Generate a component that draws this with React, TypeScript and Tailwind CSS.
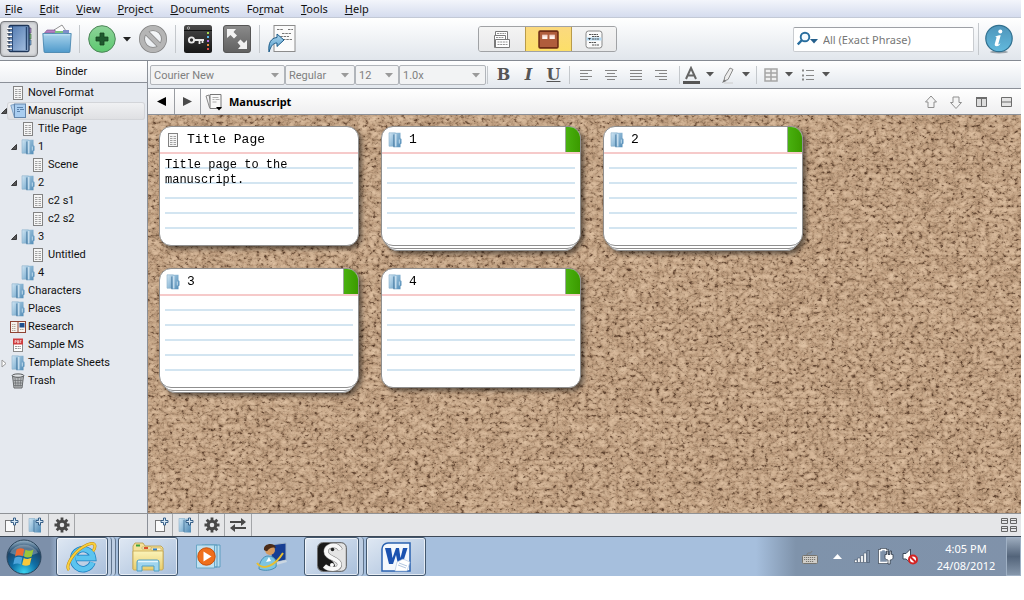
import type { ReactNode } from 'react';

type IconKind = 'page' | 'folder' | 'draft' | 'research' | 'pdf' | 'trash';

type BinderItem = {
  label: string;
  icon: IconKind;
  level: 0 | 1 | 2;
  arrow?: 'open' | 'closed';
  selected?: boolean;
};

const MENUS = [
  ['', 'F', 'ile'],
  ['', 'E', 'dit'],
  ['', 'V', 'iew'],
  ['', 'P', 'roject'],
  ['', 'D', 'ocuments'],
  ['Fo', 'r', 'mat'],
  ['', 'T', 'ools'],
  ['', 'H', 'elp'],
];

const BINDER: BinderItem[] = [
  { label: 'Novel Format', icon: 'page', level: 0 },
  { label: 'Manuscript', icon: 'draft', level: 0, arrow: 'open', selected: true },
  { label: 'Title Page', icon: 'page', level: 1 },
  { label: '1', icon: 'folder', level: 1, arrow: 'open' },
  { label: 'Scene', icon: 'page', level: 2 },
  { label: '2', icon: 'folder', level: 1, arrow: 'open' },
  { label: 'c2 s1', icon: 'page', level: 2 },
  { label: 'c2 s2', icon: 'page', level: 2 },
  { label: '3', icon: 'folder', level: 1, arrow: 'open' },
  { label: 'Untitled', icon: 'page', level: 2 },
  { label: '4', icon: 'folder', level: 1 },
  { label: 'Characters', icon: 'folder', level: 0 },
  { label: 'Places', icon: 'folder', level: 0 },
  { label: 'Research', icon: 'research', level: 0 },
  { label: 'Sample MS', icon: 'pdf', level: 0 },
  { label: 'Template Sheets', icon: 'folder', level: 0, arrow: 'closed' },
  { label: 'Trash', icon: 'trash', level: 0 },
];

const INDENT = { 0: 'pl-0', 1: 'pl-[10px]', 2: 'pl-[20px]' };

const CARDS = [
  { title: 'Title Page', text: 'Title page to the manuscript.', icon: 'page' as IconKind },
  { title: '1', icon: 'folder' as IconKind, label: true, stack: true },
  { title: '2', icon: 'folder' as IconKind, label: true, stack: true },
  { title: '3', icon: 'folder' as IconKind, label: true, stack: true },
  { title: '4', icon: 'folder' as IconKind, label: true },
];

function Defs() {
  return (
    <svg className="absolute h-0 w-0" aria-hidden="true">
      <defs>
        <linearGradient id="folder" x2="1" y2="1">
          <stop offset="0" stopColor="#d3e7f4" />
          <stop offset="1" stopColor="#6fa5ca" />
        </linearGradient>
        <linearGradient id="folderFront" x2="1" y2="1">
          <stop offset="0" stopColor="#a9cbe2" />
          <stop offset="1" stopColor="#4c88b4" />
        </linearGradient>
        <linearGradient id="blueV" x2="0" y2="1">
          <stop offset="0" stopColor="#a9d3ec" />
          <stop offset="1" stopColor="#4f9acb" />
        </linearGradient>
        <linearGradient id="notebook" x2="1" y2="1">
          <stop offset="0" stopColor="#4d76ad" />
          <stop offset="1" stopColor="#a9c3e3" />
        </linearGradient>
        <linearGradient id="green" x2="0" y2="1">
          <stop offset="0" stopColor="#8ed39a" />
          <stop offset="1" stopColor="#5cc96f" />
        </linearGradient>
        <linearGradient id="info" x2="0" y2="1">
          <stop offset="0" stopColor="#4e94b9" />
          <stop offset="1" stopColor="#62bade" />
        </linearGradient>
        <linearGradient id="dark" x2="0" y2="1">
          <stop offset="0" stopColor="#4a4a4a" />
          <stop offset="1" stopColor="#161616" />
        </linearGradient>
        <linearGradient id="gray" x2="0" y2="1">
          <stop offset="0" stopColor="#8b8b8b" />
          <stop offset="1" stopColor="#606060" />
        </linearGradient>
        <radialGradient id="orb" cx=".5" cy=".95" r=".95">
          <stop offset="0" stopColor="#39d3f0" />
          <stop offset=".4" stopColor="#0f6fa6" />
          <stop offset=".75" stopColor="#1c4468" />
          <stop offset="1" stopColor="#9fb9cc" />
        </radialGradient>
        <linearGradient id="manila" x2="0" y2="1">
          <stop offset="0" stopColor="#fbf3b9" />
          <stop offset="1" stopColor="#e9cd6c" />
        </linearGradient>
      </defs>
    </svg>
  );
}

function ItemIcon({ kind }: { kind: IconKind }) {
  return (
    <svg width="16" height="16" viewBox="0 0 16 16" className="shrink-0" aria-hidden="true">
      {kind === 'page' && (
        <>
          <rect x="3.5" y="1.5" width="9" height="13" fill="#f6f6f6" stroke="#828282" />
          <path d="M5 4.500h6M5 6.500h6M5 8.500h6M5 10.500h6M5 12.500h6" stroke="#a2a2a2" strokeDasharray="2 .5 1 .5" />
        </>
      )}
      {kind === 'folder' && (
        <>
          <path d="M2 .8h6.500v13.400H2z" fill="url(#folder)" stroke="#86aeca" strokeWidth=".6" />
          <path d="M6.800 2.500 9 .8h4.500v5.400l1 .8v4.500l-1 .7v3H6.800z" fill="url(#folderFront)" />
          <path d="M6.800 2.500v12.700" stroke="#3d7097" strokeWidth=".8" />
          <path d="M8.800 2v12.500" stroke="#d5e8f4" strokeWidth="1.200" />
          <path d="M12.300 7.500v4" stroke="#d5e8f4" strokeWidth=".8" />
        </>
      )}
      {kind === 'draft' && (
        <>
          <path d="m.8 2.300 3-.9 3 12-2.400.9z" fill="#b9d3ee" stroke="#6b93bd" strokeWidth=".8" />
          <rect x="4.500" y="1" width="11" height="13.500" fill="#a9cdf0" stroke="#6486ab" />
          <path d="M7 4.500h6M7 6.500h2M10 6.500h4M7 8.500h3" stroke="#49709d" strokeWidth=".8" />
        </>
      )}
      {kind === 'research' && (
        <>
          <rect x=".5" y="2.500" width="15" height="11" fill="#f6f3ee" stroke="#8d4233" />
          <path d="M8 2v12" stroke="#8d4233" />
          <path d="M2 5.500h4M2 7.500h4M2 9.500h4M2 11.500h4M10 10.500h4" stroke="#b7aca0" strokeDasharray="1.500 .5" />
          <rect x="9.500" y="4" width="5" height="4.500" fill="#1f4f8f" />
        </>
      )}
      {kind === 'pdf' && (
        <>
          <rect x="3.500" y="2.500" width="9" height="12" fill="#fff" stroke="#8a8a8a" />
          <path d="M3 1.500h10v6H3z" fill="#cf3a3c" />
          <path d="M5 6V3.500h1.200V5H5M7.500 3.500V6H8.500V3.500zM10 6V3.500h1.500M10 5h1.200" stroke="#fff" strokeWidth=".6" fill="none" />
          <path d="M5 9.500h6M5 11.500h6" stroke="#999" strokeDasharray="2 .6" />
        </>
      )}
      {kind === 'trash' && (
        <>
          <path d="m2.500 3 1.500 12h8l1.500-12z" fill="#b9bcbe" stroke="#66696b" />
          <ellipse cx="8" cy="2.600" rx="5.800" ry="1.700" fill="#dfe2e4" stroke="#55585a" />
          <path d="m5 5 1 9M8 5v9M11 5l-1 9M3.500 7.500h9M4 10h8M4 12.500h8" stroke="#696c6e" strokeWidth=".7" />
        </>
      )}
    </svg>
  );
}

function Caret({ className = '' }: { className?: string }) {
  return (
    <svg width="8" height="5" viewBox="0 0 8 5" className={className} aria-hidden="true">
      <path d="M0 0h8L4 4.500z" fill="currentColor" />
    </svg>
  );
}

function Sep({ className = '' }: { className?: string }) {
  return <span className={`w-px shrink-0 bg-[#c4c8cc] ${className}`} />;
}

function IconButton({ label, className = '', children }: { label: string; className?: string; children: ReactNode }) {
  return (
    <button type="button" aria-label={label} className={`flex shrink-0 items-center justify-center ${className}`}>
      {children}
    </button>
  );
}

function MenuBar() {
  return (
    <nav className="flex h-[18px] shrink-0 items-center gap-[17px] border-b border-[#c3c9d6] bg-linear-to-b from-[#f3f5fb] to-[#d5dcee] pl-[5px] text-[11px] leading-4 text-[#111]">
      {MENUS.map(([before, key, after]) => (
        <button key={before + key + after} type="button">
          {before}
          <span className="underline">{key}</span>
          {after}
        </button>
      ))}
    </nav>
  );
}

function Toolbar() {
  return (
    <header className="flex h-[43px] shrink-0 items-center justify-between border-b border-[#858a93] bg-linear-to-b from-white to-[#e1e6ec]">
      <div className="flex items-center pr-1.5">
        <IconButton label="Binder" className="h-9 w-[38px] rounded border border-[#77797d] bg-[#d8dadd] shadow-[inset_0_0_3px_#9a9ca0]">
          <svg width="28" height="30" viewBox="0 0 28 30">
            <path d="M22 4h4v5h-4z" fill="#a682c9" stroke="#48405c" strokeWidth=".6" />
            <path d="M22 10h4v5h-4z" fill="#76b877" stroke="#3a5a3c" strokeWidth=".6" />
            <path d="M22 16h4v5h-4z" fill="#7aa6d2" stroke="#33506e" strokeWidth=".6" />
            <rect x="4" y="1.500" width="20" height="26" rx="1.500" fill="url(#notebook)" stroke="#1d3558" strokeWidth="1.300" />
            <path d="M7.500 2v25" stroke="#2c4d7c" />
            <path d="M21.500 3v23" stroke="#27456f" strokeWidth="1.500" />
            <path d="M2 4.500h5M2 8.500h5M2 12.500h5M2 16.500h5M2 20.500h5M2 24.500h5" stroke="#fff" strokeWidth="1.600" />
            <path d="M2 5.600h5M2 9.600h5M2 13.600h5M2 17.600h5M2 21.600h5M2 25.600h5" stroke="#3b434f" strokeWidth=".7" />
          </svg>
        </IconButton>
        <IconButton label="Collections" className="ml-1 h-9 w-[30px]">
          <svg width="30" height="30" viewBox="0 0 30 30">
            <path d="m12 6 8-5 6 9-16 2z" fill="#fdfdfd" stroke="#777" strokeWidth=".8" />
            <path d="M2.500 9 5 6h8l1 3z" fill="#b57fc4" stroke="#735180" strokeWidth=".6" />
            <path d="M13 9V7h8v2z" fill="#7bc47f" />
            <path d="M21 9V6h6v3z" fill="#7f8ec9" />
            <path d="M.8 9.500h28.400l-1.200 18a1 1 0 0 1-1 1H3a1 1 0 0 1-1-1z" fill="url(#blueV)" stroke="#3f7fa9" strokeWidth=".8" />
            <path d="M2 10.800h26" stroke="#c6e4f4" />
          </svg>
        </IconButton>
        <Sep className="ml-[7px] h-7" />
        <IconButton label="Add" className="ml-2 h-9 w-7">
          <svg width="28" height="28" viewBox="0 0 28 28">
            <circle cx="14" cy="14" r="13.300" fill="url(#green)" stroke="#4d8558" />
            <path d="M12 8h4v4h4v4h-4v4h-4v-4H8v-4h4z" fill="#1f5a2f" stroke="#17421f" strokeWidth=".8" />
          </svg>
        </IconButton>
        <IconButton label="Add options" className="ml-[7px] h-9 w-2 text-[#222]">
          <Caret />
        </IconButton>
        <IconButton label="Trash" className="ml-2 h-9 w-7">
          <svg width="28" height="28" viewBox="0 0 28 28" fill="none">
            <circle cx="14" cy="14" r="11" stroke="#858585" strokeWidth="6" />
            <path d="m6.500 6.500 15 15" stroke="#858585" strokeWidth="5.500" />
            <circle cx="14" cy="14" r="11" stroke="#b5b5b5" strokeWidth="4.400" />
            <path d="m6.500 6.500 15 15" stroke="#b5b5b5" strokeWidth="4" />
          </svg>
        </IconButton>
        <Sep className="ml-2 h-7" />
        <IconButton label="Keywords" className="ml-2 h-9 w-7">
          <svg width="28" height="28" viewBox="0 0 28 28">
            <rect width="28" height="28" rx="2.500" fill="url(#dark)" />
            <path d="M0 5.500h28" stroke="#111" />
            <circle cx="4.500" cy="3" r="1.200" fill="none" stroke="#ccc" strokeWidth=".7" />
            <circle cx="7.500" cy="15" r="2.600" fill="none" stroke="#e9e9e9" strokeWidth="1.900" />
            <path d="M10 15h10M15.500 15v4M18.500 15v3" stroke="#e9e9e9" strokeWidth="1.800" />
            <path d="M23 7h2v2h-2z" fill="#a5d84f" />
            <path d="M23 11h2v2h-2z" fill="#58b8e8" />
            <path d="M23 15h2v2h-2z" fill="#b36be0" />
            <path d="M23 19h2v2h-2z" fill="#ee8b3c" />
            <path d="M23 23h2v2h-2z" fill="#df4a4a" />
          </svg>
        </IconButton>
        <IconButton label="Full screen" className="ml-[11px] h-9 w-7">
          <svg width="28" height="28" viewBox="0 0 28 28">
            <rect x=".5" y=".5" width="27" height="27" rx="2.500" fill="url(#gray)" stroke="#555" />
            <path d="M4 4h9l-2.500 3 3.500 3.500-3 3L7.500 10 4 13zM24 24h-9l2.500-3-3-3.500 3-3L21 18l3-3z" fill="#f3f3f3" />
          </svg>
        </IconButton>
        <Sep className="ml-2 h-7" />
        <IconButton label="Compile" className="ml-2 h-9 w-7">
          <svg width="28" height="30" viewBox="0 0 28 30">
            <rect x="6" y="1.500" width="21" height="26" fill="#fbfbfb" stroke="#8c8c8c" />
            <path d="M9 5.500h6M20 5.500h5M14 9.500h9M9 12.500h12M15 15.500h9" stroke="#777" strokeDasharray="2.500 .8" />
            <path d="M1 28c-1-9 2-14 8-14.500V10l7 6-7 6.500V19c-4 0-6 3-8 9z" fill="url(#blueV)" stroke="#1d5b88" />
          </svg>
        </IconButton>
      </div>

      <div className="flex h-[26px] overflow-hidden rounded-[3px] border border-[#a0a2a5] bg-[#eceded]">
        <IconButton label="Document view" className="w-[46px] bg-linear-to-b from-[#f4f4f4] to-[#e8e9ea]">
          <svg width="18" height="19" viewBox="0 0 18 19" stroke="#7a7a7a">
            <path d="M2.500 1.500h12v8h-12z" fill="#fff" />
            <path d="M4 3.500h9" strokeDasharray="2 .7" strokeWidth=".8" />
            <path d="M1.500 5.500h11v12h-11z" fill="#fff" />
            <path d="M3 7.500h8" strokeDasharray="2 .7" strokeWidth=".8" />
            <path d="M2.500 9.500h14v8h-14z" fill="#fff" />
            <path d="M4.500 12h10M4.500 14.500h10" strokeDasharray="2 .7" strokeWidth=".8" />
          </svg>
        </IconButton>
        <IconButton label="Corkboard" className="w-[47px] border-x border-[#b99b4a] bg-linear-to-b from-[#fbd97f] to-[#fcdf68]">
          <svg width="21" height="19" viewBox="0 0 20 18">
            <rect x="1" y="1" width="18" height="16" rx="1" fill="#b05d3c" stroke="#6c2b16" strokeWidth="1.500" />
            <path d="M4 4.500h5v4H4zM11 4.500h5v4h-5z" fill="#fff3ee" />
            <path d="M4 5.500h5M11 5.500h5" stroke="#e4a293" strokeWidth=".6" />
          </svg>
        </IconButton>
        <IconButton label="Outline" className="w-11 bg-linear-to-b from-[#f4f4f4] to-[#e8e9ea]">
          <svg width="18" height="19" viewBox="0 0 18 19">
            <rect x="1" y="1" width="16" height="17" rx="2.500" fill="#fafafa" stroke="#888" />
            <path d="M1.500 7.500h15v3h-15z" fill="#b5d9f1" />
            <path d="M4 4.500h9M7 6.500h7M7 9h7M4 12.500h7M7 15h7" stroke="#555" strokeDasharray="2 .5" />
            <path d="m3 8 3 0L4.500 10z" fill="#333" />
          </svg>
        </IconButton>
      </div>

      <div className="flex items-center">
        <label className="flex h-[25px] w-[181px] items-center rounded-[2px] border border-[#c9ccd0] border-t-[#9da0a5] bg-white pl-[3px]">
          <svg width="22" height="16" viewBox="0 0 22 16" className="shrink-0">
            <circle cx="8" cy="6" r="4.300" fill="#f5fbff" stroke="#276d9e" strokeWidth="1.900" />
            <path d="m5 9-4.200 4.500" stroke="#276d9e" strokeWidth="2.400" />
            <path d="M13 8h8l-4 4.500z" fill="#245f8c" />
          </svg>
          <input
            aria-label="Search project"
            placeholder="All (Exact Phrase)"
            className="ml-1 w-full min-w-0 bg-transparent pt-0.5 text-[11px] placeholder:text-[#777] focus:outline-none"
          />
        </label>
        <Sep className="ml-1 h-8" />
        <IconButton label="Inspector" className="mr-2 ml-[6px] h-9 w-7">
          <svg width="28" height="30" viewBox="0 0 28 30">
            <ellipse cx="14" cy="28" rx="9" ry="1.500" fill="#9aa3aa" />
            <circle cx="14" cy="14.500" r="13.200" fill="url(#info)" stroke="#31708f" strokeWidth="1.200" />
            <circle cx="15.300" cy="7.600" r="2" fill="#fff" />
            <path d="M10.500 12.500c2-.9 3.500-1.200 5.200-1.200l-2.400 8.600c-.2.800.5.800 2.100-.6-.6 1.800-1.900 2.900-3.700 2.900-1.700 0-2.300-1-1.900-2.500l1.700-6c.1-.6-.3-.7-1-.6z" fill="#fff" />
          </svg>
        </IconButton>
      </div>
    </header>
  );
}

function Binder() {
  return (
    <aside className="flex w-[148px] shrink-0 flex-col border-r border-[#8b9098] bg-[#e5e9ef]">
      <h2 className="flex h-[22px] items-center justify-center border-b border-[#8b9098] bg-linear-to-b from-white to-[#eef0f4] pt-0.5 pr-1 font-[Roboto,sans-serif] text-[11px]">
        Binder
      </h2>
      <ul className="flex-1 pt-px font-[Roboto,sans-serif]">
        {BINDER.map((item, i) => (
          <li key={i} className={INDENT[item.level]}>
            <button type="button" className="flex h-[18px] w-full items-center text-left">
              <span className="flex w-[7px] shrink-0 justify-end">
                {item.arrow === 'open' && (
                  <svg width="6" height="6" viewBox="0 0 6 6">
                    <path d="M5.500.500v5h-5z" fill="#555" stroke="#222" strokeWidth=".8" />
                  </svg>
                )}
                {item.arrow === 'closed' && (
                  <svg width="6" height="9" viewBox="0 0 6 9">
                    <path d="M1 1v7l4-3.500z" fill="#fff" stroke="#999" />
                  </svg>
                )}
              </span>
              <span
                className={`mr-[2px] flex h-[18px] flex-1 items-center gap-[2px] pl-[3px] ${
                  item.selected ? 'rounded-[3px] bg-linear-to-b from-[#f1f2f4] to-[#dedfe2] ring-1 ring-[#d3d5d9] ring-inset' : ''
                }`}
              >
                <ItemIcon kind={item.icon} />
                {item.label}
              </span>
            </button>
          </li>
        ))}
      </ul>
      <footer className="flex h-[23px] border-t border-[#8f9296] bg-[#e5e6e8]">
        <FooterTools />
      </footer>
    </aside>
  );
}

function FooterTools() {
  return (
    <>
      <IconButton label="Add document" className="w-[23px] border-r border-[#a3a5a8]">
        <NewItemIcon />
      </IconButton>
      <IconButton label="Add folder" className="w-[26px] border-r border-[#a3a5a8]">
        <NewItemIcon folder />
      </IconButton>
      <IconButton label="Actions" className="w-[26px] border-r border-[#a3a5a8]">
        <svg width="16" height="16" viewBox="0 0 16 16" fill="none" stroke="#484848">
          <circle cx="8" cy="8" r="3.800" strokeWidth="3" />
          <path d="M8 .5v3M8 12.500v3M.5 8h3M12.500 8h3M2.700 2.700l2 2M11.300 11.300l2 2M13.300 2.700l-2 2M4.700 11.300l-2 2" strokeWidth="2.800" />
        </svg>
      </IconButton>
    </>
  );
}

function NewItemIcon({ folder = false }: { folder?: boolean }) {
  return (
    <svg width="16" height="16" viewBox="0 0 16 16">
      {folder ? (
        <>
          <path d="M1 1.500h6v13H1z" fill="url(#folder)" stroke="#86aeca" strokeWidth=".6" />
          <path d="M6 3 8.500 1.500h4.500V15.500H6z" fill="url(#folderFront)" />
          <path d="M6 3v12" stroke="#3d7097" strokeWidth=".8" />
        </>
      ) : (
        <rect x="2.500" y="3.500" width="9" height="11" fill="#fafafa" stroke="#777" />
      )}
      <path d="M10.500 1h2v2.500H15v2h-2.500V8h-2V5.500H8v-2h2.500z" fill="#d5e7f5" stroke="#28527d" strokeWidth=".9" />
    </svg>
  );
}

function FormatSelect({ label, value, className }: { label: string; value: string; className: string }) {
  return (
    <div className={`relative ${className}`}>
      <select
        aria-label={label}
        className="h-5 w-full appearance-none rounded-[2px] border border-[#b1b5ba] bg-[#f2f3f4] pt-0.5 pl-[3px] font-[Roboto,sans-serif] text-[11px] text-[#808080]"
      >
        <option>{value}</option>
      </select>
      <Caret className="pointer-events-none absolute top-2 right-1.5 text-[#9a9a9a]" />
    </div>
  );
}

const ALIGN = {
  left: 'M0 .5h12M0 3.500h8M0 6.500h12M0 9.500h8',
  center: 'M0 .5h12M2 3.500h8M0 6.500h12M2 9.500h8',
  justify: 'M0 .5h12M0 3.500h12M0 6.500h12M0 9.500h12',
  right: 'M0 .5h12M4 3.500h8M0 6.500h12M4 9.500h8',
};

function FormatBar() {
  return (
    <div className="flex h-7 shrink-0 items-center border-b border-[#8b9098] bg-linear-to-b from-white to-[#e3e8ee] pl-[2px] text-[#555]">
      <FormatSelect label="Font" value="Courier New" className="w-[135px]" />
      <FormatSelect label="Style" value="Regular" className="w-[70px]" />
      <FormatSelect label="Size" value="12" className="w-11" />
      <FormatSelect label="Line spacing" value="1.0x" className="w-[87px]" />
      <Sep className="mr-[3px] ml-px h-[18px]" />
      <button type="button" className="w-[25px] font-[DejaVu_Serif,serif] text-[16px] leading-5 font-bold">
        B
      </button>
      <button type="button" className="w-[25px] font-[DejaVu_Serif,serif] text-[16px] leading-5 font-bold italic">
        I
      </button>
      <button type="button" className="w-[25px] font-[DejaVu_Serif,serif] text-[16px] leading-5 font-bold underline">
        U
      </button>
      <Sep className="mx-[3px] h-[18px]" />
      {Object.entries(ALIGN).map(([name, d]) => (
        <IconButton key={name} label={`Align ${name}`} className="h-5 w-[25px]">
          <svg width="12" height="10" viewBox="0 0 12 10">
            <path d={d} stroke="#858585" />
          </svg>
        </IconButton>
      ))}
      <Sep className="ml-[6px] h-[18px]" />
      <IconButton label="Text color" className="ml-0.5 h-5 w-[18px]">
        <svg width="18" height="18" viewBox="0 0 18 18">
          <path d="m4 13 5-11 5 11M6 9.500h6" fill="none" stroke="#666" strokeWidth="2" />
          <path d="M1 15h17v3H1z" fill="#555" />
        </svg>
      </IconButton>
      <Caret className="mx-[6px]" />
      <IconButton label="Highlight" className="h-5 w-4">
        <svg width="16" height="18" viewBox="0 0 16 18">
          <path d="M10 2 13 3.500 8 13.500 4 15l.8-4.500z" fill="#ececec" stroke="#8a8a8a" />
          <path d="m2 17 2-3.500 2.500 1.500z" fill="#777" />
          <path d="M4 17h9" stroke="#ccc" />
        </svg>
      </IconButton>
      <Caret className="mx-[6px]" />
      <Sep className="h-[18px]" />
      <IconButton label="Table" className="ml-[7px] h-5 w-[14px]">
        <svg width="14" height="14" viewBox="0 0 14 14">
          <path d="M1 1h12v12H1zM1 5h12M1 9h12M7 1v12" fill="#f0f0f0" stroke="#a5a5a5" strokeWidth="1.500" />
        </svg>
      </IconButton>
      <Caret className="mx-[7px]" />
      <IconButton label="List" className="ml-0.5 h-5 w-3">
        <svg width="12" height="12" viewBox="0 0 12 12" stroke="#888">
          <path d="M4 1.500h8M4 6.500h8M4 10.500h8" />
          <path d="M0 1.500h2M0 6.500h2M0 10.500h2" strokeWidth="2" />
        </svg>
      </IconButton>
      <Caret className="mx-2" />
    </div>
  );
}

function EditorHeader() {
  return (
    <div className="flex h-[26px] shrink-0 items-center border-b border-[#8b9098] bg-linear-to-b from-white to-[#efeff0]">
      <IconButton label="Back" className="h-full w-[27px] border-r border-[#9a9da2]">
        <svg width="9" height="9" viewBox="0 0 9 9">
          <path d="M9 0v9L0 4.500z" fill="#000" />
        </svg>
      </IconButton>
      <IconButton label="Forward" className="h-full w-[26px] border-r border-[#9a9da2]">
        <svg width="9" height="9" viewBox="0 0 9 9">
          <path d="M0 0v9l9-4.500z" fill="#4a4a4a" />
        </svg>
      </IconButton>
      <IconButton label="Item menu" className="ml-1 h-5 w-[18px]">
        <svg width="18" height="18" viewBox="0 0 18 18">
          <path d="m1 3 3-1 2.500 12-2 .6z" fill="#f3f3f3" stroke="#888" />
          <path d="M5 1.500h11v14H5z" fill="#f9f9f9" stroke="#777" />
          <path d="M7.500 4.500h6M7.500 6.500h2M10.500 6.500h4M7.500 9h4" stroke="#999" strokeWidth=".8" />
          <path d="M11 14h6l-3 3.500z" fill="#000" />
        </svg>
      </IconButton>
      <h1 className="ml-1.5 flex-1 pt-0.5 text-[11px] font-bold text-black">Manuscript</h1>
      <div className="flex items-center gap-[11px] pr-2">
        <IconButton label="Previous" className="w-[14px]">
          <svg width="14" height="14" viewBox="0 0 14 14">
            <path d="m7 1 5.500 6H10v5.500H4V7H1.500z" fill="#f4f4f4" stroke="#8f8f8f" />
          </svg>
        </IconButton>
        <IconButton label="Next" className="w-[14px]">
          <svg width="14" height="14" viewBox="0 0 14 14">
            <path d="m7 13.500 5.500-6H10V2H4v5.500H1.500z" fill="#f4f4f4" stroke="#8f8f8f" />
          </svg>
        </IconButton>
        <IconButton label="Split vertically" className="w-[14px]">
          <svg width="11" height="10" viewBox="0 0 11 10">
            <path d="M.5.500h10v9H.5zM5.500 1v8" fill="#dcdcdc" stroke="#6d6d6d" />
            <path d="M0 1h11" stroke="#6d6d6d" strokeWidth="2" />
          </svg>
        </IconButton>
        <IconButton label="Split horizontally" className="w-[14px]">
          <svg width="11" height="10" viewBox="0 0 11 10">
            <path d="M.5.500h10v9H.5zM0 5h11" fill="#e4e4e4" stroke="#6d6d6d" />
          </svg>
        </IconButton>
      </div>
    </div>
  );
}

function CorkTexture() {
  return (
    <svg className="absolute inset-0 h-full w-full" aria-hidden="true">
      <filter id="cork" x="0" y="0" width="100%" height="100%" colorInterpolationFilters="sRGB">
        {/* cracks between the cork flakes */}
        <feTurbulence type="turbulence" baseFrequency="0.1 0.12" numOctaves="3" seed="11" />
        <feColorMatrix values="1 0 0 0 0  1 0 0 0 0  1 0 0 0 0  0 0 0 0 1" />
        <feComponentTransfer result="cracks">
          <feFuncR type="table" tableValues=".62 .76 .8 .83 .86 .87 .87" />
          <feFuncG type="table" tableValues=".51 .63 .68 .71 .74 .76 .76" />
          <feFuncB type="table" tableValues=".4 .51 .56 .59 .62 .64 .64" />
        </feComponentTransfer>
        {/* fine grain */}
        <feTurbulence type="fractalNoise" baseFrequency="0.24 0.3" numOctaves="3" seed="4" />
        <feColorMatrix values="0 1 0 0 0  0 1 0 0 0  0 1 0 0 0  0 0 0 0 1" />
        <feComponentTransfer result="grain">
          <feFuncR type="table" tableValues=".45 .45 .55 .82 .94 .98 1.04 1.08 1.1 1.1" />
          <feFuncG type="table" tableValues=".37 .37 .48 .79 .93 .98 1.04 1.08 1.1 1.1" />
          <feFuncB type="table" tableValues=".32 .32 .43 .76 .92 .98 1.04 1.08 1.1 1.1" />
        </feComponentTransfer>
        <feComposite in="cracks" in2="grain" operator="arithmetic" k1="1" />
      </filter>
      <rect width="100%" height="100%" fill="#c3a080" filter="url(#cork)" />
    </svg>
  );
}

function IndexCard({ card }: { card: (typeof CARDS)[number] }) {
  return (
    <li className="relative h-[120px] w-[200px] drop-shadow-[3px_3px_2px_rgba(0,0,0,0.5)]">
      {card.stack && (
        <>
          <div className="absolute inset-x-1 top-3 -bottom-[5px] rounded-xl border border-[#8f8f8f] bg-white" />
          <div className="absolute inset-x-0.5 top-3 -bottom-[3px] rounded-xl border border-[#8f8f8f] bg-white" />
        </>
      )}
      <article className="relative h-full overflow-hidden rounded-xl border border-[#8f8f8f] bg-white font-[Liberation_Mono,monospace] text-black">
        <header className="flex h-[27px] items-center border-b-2 border-[#f6caca] pl-[5px]">
          <ItemIcon kind={card.icon} />
          <h3 className="ml-1.5 flex-1 pt-px text-[13px]">{card.title}</h3>
          {card.label && <span className="h-full w-[15px] border-l border-[#9aa99a] bg-linear-to-r from-[#49b10f] to-[#3b9a00]" />}
        </header>
        <p className="mx-[5px] h-[75px] bg-[repeating-linear-gradient(to_bottom,transparent_0px,transparent_13px,#d3e5f1_13px,#d3e5f1_15px)] pt-1 text-[12px] leading-[15px]">
          {card.text}
        </p>
      </article>
    </li>
  );
}

function Corkboard() {
  return (
    <section className="relative flex-1 overflow-hidden bg-[#c3a080]">
      <CorkTexture />
      <ul className="relative flex flex-wrap gap-[22px] pt-[11px] pl-[11px]">
        {CARDS.map((card) => (
          <IndexCard key={card.title} card={card} />
        ))}
      </ul>
    </section>
  );
}

function EditorFooter() {
  return (
    <footer className="flex h-[23px] shrink-0 border-t border-[#8f9296] bg-[#e5e6e8] pl-[2px]">
      <FooterTools />
      <IconButton label="Swap" className="w-[27px] border-r border-[#a3a5a8]">
        <svg width="18" height="14" viewBox="0 0 18 14" fill="#484848">
          <path d="M1 3h11V0l5 4-5 4V5H1zM17 9H6V6L1 10l5 4v-3h11z" />
        </svg>
      </IconButton>
      <IconButton label="Card options" className="mr-1 ml-auto w-4">
        <svg width="16" height="14" viewBox="0 0 16 14" fill="none" stroke="#666">
          <path d="M.5.500h6v5h-6zM9.500.500h6v5h-6zM.5 8.500h6v5h-6zM9.500 8.500h6v5h-6zM1 2.500h5M10 2.500h5M1 10.500h5M10 10.500h5" />
        </svg>
      </IconButton>
    </footer>
  );
}

const FRAME =
  'border border-[#43586f] bg-linear-to-br from-[#dfe8f3] to-[#a9bfdb] shadow-[inset_0_0_0_1px_rgba(255,255,255,0.65)] rounded-[3px]';

function Taskbar() {
  return (
    <div className="flex h-10 shrink-0 items-center border-t border-[#3d4856] bg-[linear-gradient(to_right,#7d90aa_0px,#7d90aa_50px,#a6bfdd_62px,#a6bfdd_calc(100%-265px),#7f93ab_calc(100%-225px),#8092aa_100%)]">
      <IconButton label="Start" className="ml-1.5 h-full w-9">
        <svg width="36" height="36" viewBox="0 0 36 36">
          <circle cx="18" cy="18" r="17" fill="url(#orb)" stroke="#29435a" />
          <path d="M4 14a15 13 0 0 1 28 0c-9 4-19 4-28 0z" fill="#fff" opacity=".28" />
          <path d="M10.500 10.500c3-1.700 5.400-1.700 7.700-.3l-1.500 7c-2.400-1.400-5-1.300-7.700.2z" fill="#ee6a33" />
          <path d="M19.500 10.800c2.800 1.300 5.500 1.200 8-.4l-1.800 7c-2.600 1.500-5.200 1.500-7.700.2z" fill="#9bc63b" />
          <path d="M8.700 18.800c2.700-1.500 5.200-1.500 7.700-.2l-1.600 6.800c-2.400-1.300-5-1.200-7.600.2z" fill="#4da5dc" />
          <path d="M17.700 19c2.600 1.300 5.200 1.300 7.800-.2l-1.700 7c-2.600 1.400-5.200 1.400-7.700 0z" fill="#f8c83a" />
        </svg>
      </IconButton>
      <div className="ml-[14px] flex h-full">
        <IconButton label="Internet Explorer" className={`h-full w-[52px] ${FRAME}`}>
          <svg width="32" height="32" viewBox="0 0 32 32" fill="none">
            <path d="M26.500 21.500A10 10 0 1 1 27 17H10" stroke="#1d7fc0" strokeWidth="6.500" />
            <path d="M26.500 21.500A10 10 0 1 1 27 17H10" stroke="#5cc4ef" strokeWidth="5" />
            <path d="M3 29C-1 25 7 12 17 6c6-4 12-5 12-1 0 2-1 4-2 5" stroke="#c48a10" strokeWidth="3" />
            <path d="M3 29C-1 25 7 12 17 6c6-4 12-5 12-1 0 2-1 4-2 5" stroke="#f7cf3d" strokeWidth="2" />
          </svg>
        </IconButton>
        <span className="h-full w-1 rounded-r border-r border-[#61758d] bg-[#bccde2]" />
        <span className="h-full w-1 rounded-r border-r border-[#61758d] bg-[#bccde2]" />
      </div>
      <IconButton label="Windows Explorer" className={`ml-[2px] h-full w-[60px] ${FRAME}`}>
        <svg width="34" height="30" viewBox="0 0 34 30">
          <path d="M2 4 4 1h8l2 3h16l2 2v21H2z" fill="#f4e19a" stroke="#b79a44" strokeWidth=".8" />
          <path d="M5 2.500h4v2H5z" fill="#3aa23e" />
          <path d="M11 7V5h9l1 2z" fill="#fff8d8" stroke="#c0a24e" strokeWidth=".6" />
          <path d="M13 5h4v2h-4z" fill="#d9502b" />
          <path d="M20 8V6h10v3z" fill="#fff8d8" stroke="#c0a24e" strokeWidth=".6" />
          <path d="M22 6.500h4v2h-4z" fill="#2b7fcc" />
          <path d="M2 9h30v18a1 1 0 0 1-1 1H3a1 1 0 0 1-1-1z" fill="url(#manila)" stroke="#c7a64b" strokeWidth=".8" />
          <path d="M6 29V20q0-2 2-2h18q2 0 2 2v9h-5v-5H11v5z" fill="#9fd5ee" stroke="#4e9fc4" />
          <path d="M7 19.500h20" stroke="#e5f6fd" strokeWidth="1.500" />
        </svg>
      </IconButton>
      <IconButton label="Media Player" className="h-full w-[62px]">
        <svg width="30" height="28" viewBox="0 0 30 28">
          <path d="M11 2h15v22H11zM8 2h15v22H8z" fill="#b7def0" stroke="#5d9dc0" />
          <path d="M2.500 2h18v23h-18z" fill="#bfe1f1" stroke="#6ba7c5" />
          <circle cx="12.500" cy="13.500" r="8.700" fill="#ef6f1b" stroke="#c8500b" />
          <path d="m9.500 8.500 8 5-8 5z" fill="#fff" />
        </svg>
      </IconButton>
      <IconButton label="Live Messenger" className="h-full w-[64px]">
        <svg width="32" height="30" viewBox="0 0 32 30">
          <path d="m14 3 16-2v17l-14 3z" fill="#173e93" stroke="#9db2c8" />
          <path d="m16 21 14-3 1 2-14 4z" fill="#ccd7e2" />
          <circle cx="14" cy="8" r="5" fill="#d59a60" />
          <path d="M8 8c-1-7 11-8 12-2-4-1-6 0-8 2-1 2-2 1-4 0z" fill="#4b2c19" />
          <path d="M3 27c0-7 4-13 9-13 7 0 9 5 8 11-5 4-12 4-17 2z" fill="#7dc5e3" stroke="#4b8fb4" />
          <path d="M1 21c6 8 18 3 26-10" fill="none" stroke="#e8bf32" strokeWidth="2" />
          <path d="m13 15 2 4-5 1z" fill="#fff" />
        </svg>
      </IconButton>
      <div className="flex h-full">
        <IconButton label="Scrivener" className={`h-full w-[55px] ${FRAME}`}>
          <svg width="30" height="30" viewBox="0 0 30 30">
            <rect x=".7" y=".7" width="28.600" height="28.600" rx="5" fill="#e4e4e4" stroke="#555" />
            <path d="M15 1H6a5 5 0 0 0-5 5v18a5 5 0 0 0 5 5h9c5-3 3-8-1-11-4-2-6-4-6-9 0-4 3-7 7-8z" fill="#191919" />
            <path d="M23.500 8C22 5 19.500 3.500 16.500 3.500 12.500 3.500 9 5.500 9 9.500c0 7 13.500 7 13.500 13 0 3-3 4.500-6.500 4.500-4 0-6.500-1-8.500-3" fill="none" stroke="#777" strokeWidth="5" />
            <path d="M23.500 8C22 5 19.500 3.500 16.500 3.500 12.500 3.500 9 5.500 9 9.500c0 7 13.500 7 13.500 13 0 3-3 4.500-6.500 4.500-4 0-6.500-1-8.500-3" fill="none" stroke="#f8f8f8" strokeWidth="4" />
            <circle cx="15.500" cy="7.500" r="1.800" fill="#222" />
            <circle cx="15" cy="23" r="2" fill="#fff" />
          </svg>
        </IconButton>
        <span className="h-full w-[5px] rounded-r border-r border-[#61758d] bg-[#bccde2]" />
      </div>
      <IconButton label="Word" className={`ml-[2px] h-full w-[60px] ${FRAME}`}>
        <svg width="30" height="30" viewBox="0 0 30 30">
          <path d="M7 1h22v28H1V7a6 6 0 0 1 6-6z" fill="#f4f8fd" stroke="#2a62b0" strokeWidth="1.500" />
          <path d="M4 6h6l1.500 10L15 6h3l1.500 10L22 6h4.500l-5 16H17l-2-9-3 9H8z" fill="#1b52b0" />
          <path d="m16 20 6-3 7 3-3 9H14z" fill="#fff" stroke="#a9bfdd" strokeWidth=".6" />
          <path d="m18 21 8 3M17 23l8 3" stroke="#9db6d8" strokeWidth=".8" />
        </svg>
      </IconButton>

      <div className="ml-auto flex h-full items-center text-white">
        <IconButton label="Keyboard" className="w-4">
          <svg width="16" height="14" viewBox="0 0 16 14">
            <path d="M5 5c0-4 4 0 5-4" fill="none" stroke="#7b7b78" />
            <rect x=".5" y="5.500" width="15" height="8" rx="1" fill="#d0cec9" stroke="#77756f" />
            <path d="M2 7.500h12M2 9.500h12M4 11.500h8" stroke="#77756f" strokeDasharray="1.200 .8" />
          </svg>
        </IconButton>
        <IconButton label="Show hidden icons" className="ml-[14px] w-2.5">
          <svg width="9" height="5" viewBox="0 0 9 5">
            <path d="M4.500 0 9 5H0z" fill="#fff" />
          </svg>
        </IconButton>
        <IconButton label="Network" className="ml-3 w-4">
          <svg width="16" height="13" viewBox="0 0 16 13" fill="#fff" stroke="#445468" strokeWidth=".6">
            <path d="M.5 10h2.600v2.500H.5zM3.600 8h2.600v4.500H3.600zM6.700 5.500h2.600v7H6.700zM9.800 3h2.600v9.500H9.800z" />
            <path d="M12.900.5h2.600v12h-2.600z" fill="#8798ad" />
          </svg>
        </IconButton>
        <IconButton label="Power" className="ml-2 w-4">
          <svg width="16" height="17" viewBox="0 0 16 17">
            <path d="M1.500 2.500h2v-1h4v1h2v12h-8z" fill="#7e91a9" stroke="#222c38" strokeWidth="2.400" />
            <path d="M1.500 2.500h2v-1h4v1h2v12h-8z" fill="#7e91a9" stroke="#fff" strokeWidth="1.400" />
            <path d="M7 6.500h1.500V3H10v3.500h2V3h1.500v3.500H15v3c0 1.500-1.200 2.500-2.800 2.500v4H10v-4c-2-.2-3-1-3-2.500z" fill="#fff" stroke="#2d3947" strokeWidth=".8" />
          </svg>
        </IconButton>
        <IconButton label="Volume muted" className="ml-2 w-4">
          <svg width="16" height="17" viewBox="0 0 16 17">
            <path d="M1 5.500h3l4.500-4.500v14L4 11H1z" fill="#fff" stroke="#3c4a5b" />
            <circle cx="11" cy="11.500" r="4" fill="#fff" stroke="#d32222" strokeWidth="2" />
            <path d="m8.500 9 5 5" stroke="#d32222" strokeWidth="2" />
          </svg>
        </IconButton>
        <button type="button" className="mr-1.5 ml-[14px] w-[68px] text-center text-[11px] leading-[17px]">
          4:05 PM
          <br />
          24/08/2012
        </button>
        <button
          type="button"
          aria-label="Show desktop"
          className="h-full w-[15px] border border-[#9fb0c4] bg-linear-to-b from-[#9cabbd] via-[#53647a] to-[#8697ab]"
        />
      </div>
    </div>
  );
}

export default function App() {
  return (
    <div className="flex h-screen flex-col bg-white pr-[3px] pb-6 font-[Noto_Sans,sans-serif] text-[11px] text-[#111]">
      <Defs />
      <MenuBar />
      <Toolbar />
      <div className="flex min-h-0 flex-1">
        <Binder />
        <main className="flex min-w-0 flex-1 flex-col">
          <FormatBar />
          <EditorHeader />
          <Corkboard />
          <EditorFooter />
        </main>
      </div>
      <Taskbar />
    </div>
  );
}
